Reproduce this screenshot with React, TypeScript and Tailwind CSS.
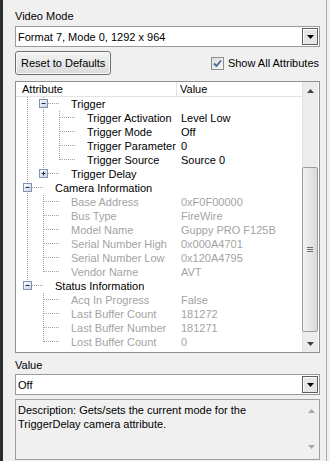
import React from "react";

type Row = {
  label: string;
  value?: string;
  level: number;
  guides: boolean[];
  last: boolean;
  expander?: "minus" | "plus";
  dim?: boolean;
};

const rows: Row[] = [
  { label: "Trigger", level: 1, guides: [true], last: false, expander: "minus" },
  { label: "Trigger Activation", value: "Level Low", level: 2, guides: [true, true], last: false },
  { label: "Trigger Mode", value: "Off", level: 2, guides: [true, true], last: false },
  { label: "Trigger Parameter", value: "0", level: 2, guides: [true, true], last: false },
  { label: "Trigger Source", value: "Source 0", level: 2, guides: [true, true], last: true },
  { label: "Trigger Delay", level: 1, guides: [true], last: true, expander: "plus" },
  { label: "Camera Information", level: 0, guides: [], last: false, expander: "minus" },
  { label: "Base Address", value: "0xF0F00000", level: 1, guides: [true], last: false, dim: true },
  { label: "Bus Type", value: "FireWire", level: 1, guides: [true], last: false, dim: true },
  { label: "Model Name", value: "Guppy PRO F125B", level: 1, guides: [true], last: false, dim: true },
  { label: "Serial Number High", value: "0x000A4701", level: 1, guides: [true], last: false, dim: true },
  { label: "Serial Number Low", value: "0x120A4795", level: 1, guides: [true], last: false, dim: true },
  { label: "Vendor Name", value: "AVT", level: 1, guides: [true], last: true, dim: true },
  { label: "Status Information", level: 0, guides: [], last: true, expander: "minus" },
  { label: "Acq In Progress", value: "False", level: 1, guides: [false], last: false, dim: true },
  { label: "Last Buffer Count", value: "181272", level: 1, guides: [false], last: false, dim: true },
  { label: "Last Buffer Number", value: "181271", level: 1, guides: [false], last: false, dim: true },
  { label: "Lost Buffer Count", value: "0", level: 1, guides: [false], last: true, dim: true },
];

const DOT = "#a0a0a0";

const TreeLines = ({ row }: { row: Row }) => {
  const w = 16 * row.level + 36;
  const cx = 16 * row.level + 8;
  return (
    <svg width={w} height={14} className="shrink-0">
      {row.guides.map((g, i) =>
        g ? (
          <line key={i} x1={16 * i + 8.5} y1={0} x2={16 * i + 8.5} y2={14} stroke={DOT} strokeDasharray="1 1" />
        ) : null
      )}
      <line x1={cx + 0.5} y1={0} x2={cx + 0.5} y2={row.last ? 7 : 14} stroke={DOT} strokeDasharray="1 1" />
      <line x1={cx + 1} y1={6.5} x2={cx + 17} y2={6.5} stroke={DOT} strokeDasharray="1 1" />
      {row.expander && (
        <g>
          <defs>
            <linearGradient id="exp" x1="0" y1="0" x2="1" y2="1">
              <stop offset="0" stopColor="#ffffff" />
              <stop offset="1" stopColor="#c8d0dc" />
            </linearGradient>
          </defs>
          <rect x={cx - 3.5} y={2.5} width={8} height={8} fill="url(#exp)" stroke="#7f93b0" />
          <line x1={cx - 1.5} y1={6.5} x2={cx + 2.5} y2={6.5} stroke="#1c2e5c" />
          {row.expander === "plus" && <line x1={cx + 0.5} y1={4.5} x2={cx + 0.5} y2={8.5} stroke="#1c2e5c" />}
        </g>
      )}
    </svg>
  );
};

const DownArrow = ({ color = "#000" }: { color?: string }) => (
  <svg width="7" height="4" viewBox="0 0 7 4">
    <path d="M0 0 H7 L3.5 4 Z" fill={color} />
  </svg>
);

const UpArrow = ({ color = "#404040" }: { color?: string }) => (
  <svg width="7" height="4" viewBox="0 0 7 4">
    <path d="M0 4 H7 L3.5 0 Z" fill={color} />
  </svg>
);

const Combo = ({ text }: { text: string }) => (
  <div className="flex h-[21px] items-center border border-[#9a9a9a] bg-white pl-[2px] pr-[1px]">
    <span className="flex-1 truncate">{text}</span>
    <div className="flex h-[17px] w-[16px] items-center justify-center border border-[#5e5e5e] bg-[#e6e6e6] shadow-[inset_1px_1px_0_#ffffff]">
      <DownArrow />
    </div>
  </div>
);

export default function App() {
  return (
    <div
      className="flex h-[461px] w-[330px] overflow-hidden bg-[#f0f0f0] text-[11px] leading-[14px] text-black"
      style={{ fontFamily: '"Liberation Sans", Arial, sans-serif' }}
    >
      <div className="w-[3px] shrink-0 bg-[#2e2e2e]" />
      <div className="flex flex-1 flex-col border-r border-[#a8a8a8] pl-[12px] pr-[6px] pt-[9px]">
        <div className="h-[14px]">Video Mode</div>
        <div className="mt-[3px]">
          <Combo text="Format 7, Mode 0, 1292 x 964" />
        </div>

        <div className="mt-[4px] flex items-center justify-between">
          <button className="h-[24px] rounded-[3px] border border-[#707070] bg-gradient-to-b from-[#f4f4f4] to-[#dadada] px-[5px] text-left shadow-[inset_0_0_0_1px_#fbfbfb]">
            Reset to Defaults
          </button>
          <label className="flex items-center gap-[4px] pr-[1px]">
            <span className="flex h-[13px] w-[13px] items-center justify-center border border-[#8f8f8f] bg-gradient-to-br from-[#dcdcdc] to-[#f6f6f6]">
              <svg width="9" height="9" viewBox="0 0 9 9">
                <path d="M1 4.5 L3.5 7 L8 1.5" fill="none" stroke="#4a6796" strokeWidth="1.8" />
              </svg>
            </span>
            <span>Show All Attributes</span>
          </label>
        </div>

        <div className="mt-[6px] flex h-[272px] border border-[#8e8f8f] bg-white">
          <div className="flex min-w-0 flex-1 flex-col">
            <div className="flex h-[15px] shrink-0 border-b border-[#e3e3e3]">
              <div className="w-[161px] border-r border-[#e3e3e3] pl-[6px]">Attribute</div>
              <div className="pl-[3px]">Value</div>
            </div>
            <div className="flex flex-col">
              {rows.map((r) => (
                <div key={r.label} className="flex h-[14px]">
                  <div className="flex w-[161px] shrink-0 overflow-hidden whitespace-nowrap pl-[3px]">
                    <TreeLines row={r} />
                    <span className={r.dim ? "text-[#a3a3a3]" : ""}>{r.label}</span>
                  </div>
                  <div className={`pl-[4px] whitespace-nowrap ${r.dim ? "text-[#a3a3a3]" : ""}`}>{r.value ?? ""}</div>
                </div>
              ))}
            </div>
          </div>

          <div className="mr-[1px] flex w-[16px] shrink-0 flex-col bg-[#ececec] shadow-[inset_1px_0_0_#e2e2e2]">
            <div className="flex h-[17px] items-center justify-center">
              <UpArrow />
            </div>
            <div className="flex flex-1 flex-col">
              <div className="h-[68px]" />
              <div className="flex h-[165px] items-center justify-center rounded-[2px] border border-[#9b9b9b] bg-gradient-to-r from-[#f3f3f3] to-[#d9d9d9]">
                <div className="flex flex-col gap-[1px]">
                  <div className="h-px w-[6px] bg-[#6e6e6e]" />
                  <div className="h-px w-[6px] bg-[#6e6e6e]" />
                  <div className="h-px w-[6px] bg-[#6e6e6e]" />
                </div>
              </div>
              <div className="flex-1" />
            </div>
            <div className="flex h-[17px] items-center justify-center">
              <DownArrow color="#404040" />
            </div>
          </div>
        </div>

        <div className="mt-[5px] h-[14px]">Value</div>
        <div className="mt-[2px]">
          <Combo text="Off" />
        </div>

        <div className="mt-[4px] flex h-[61px] border border-[#a0a0a0] bg-[#f0f0f0]">
          <div className="flex-1 pl-[2px] pt-[3px]">
            Description: Gets/sets the current mode for the
            <br />
            TriggerDelay camera attribute.
          </div>
          <div className="flex w-[16px] flex-col items-center justify-between pb-[10px] pt-[9px]">
            <UpArrow color="#a8a8a8" />
            <DownArrow color="#a8a8a8" />
          </div>
        </div>
      </div>
      <div className="w-[3px] shrink-0 bg-[#f0f0f0]" />
    </div>
  );
}
